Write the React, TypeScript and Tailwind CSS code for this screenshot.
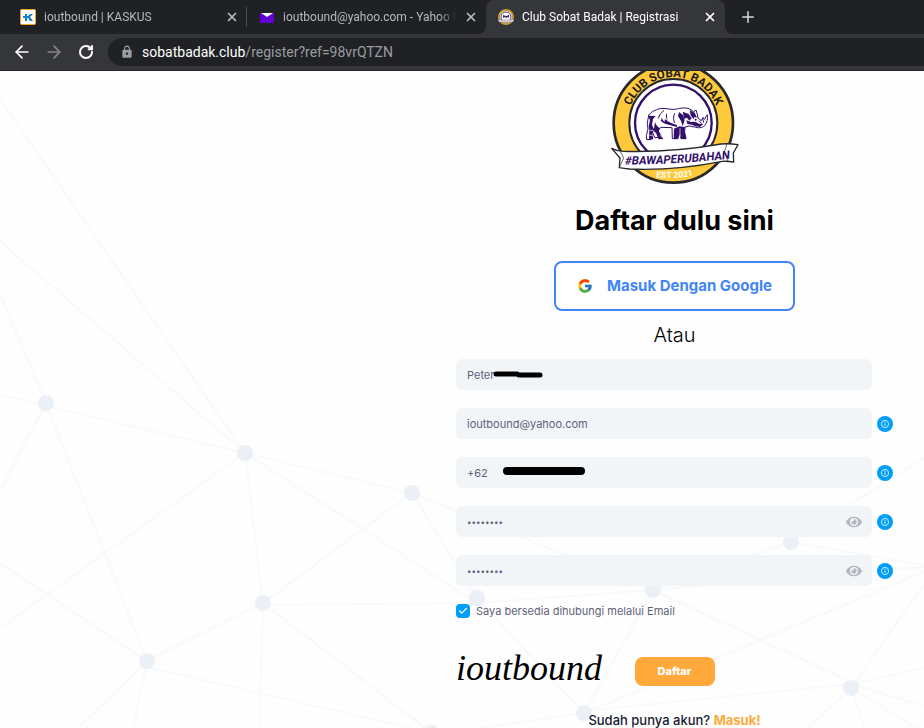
import type { ReactNode } from "react";
import { ArrowLeft, ArrowRight, Check, Plus, RotateCw, X } from "lucide-react";
import { FaEye } from "react-icons/fa";
import { FcGoogle } from "react-icons/fc";
import { MdLock } from "react-icons/md";

type TabProps = {
  title: string;
  icon: ReactNode;
  active?: boolean;
  divider?: boolean;
};

type FieldProps = {
  id: string;
  label: string;
  type?: string;
  value: string;
  info?: boolean;
  children?: ReactNode;
};

const nodes = [
  [46, 403],
  [245, 453],
  [412, 493],
  [263, 603],
  [147, 661],
  [432, 733],
  [477, 598],
  [584, 713],
  [653, 590],
  [791, 542],
  [851, 688],
];

const links = [
  "M0 99L245 453M0 241L245 453M0 294L46 403L0 491M0 395L245 453",
  "M46 403L147 661M245 453L412 493M245 453L263 603M245 453L0 628",
  "M245 453L477 603M0 563L147 661M412 493L263 603M412 493L653 590",
  "M412 493L477 598M263 603L147 661M263 605L477 603L653 590M263 603L432 733",
  "M263 603L259 740M147 661L78 728M147 661L131 740M147 667L432 733",
  "M477 598L584 713M584 713L653 590M584 713L432 735M584 711L851 684",
  "M584 713L924 572M653 590L851 682M653 590L791 542M791 542L924 565",
  "M653 590L924 567M791 542L924 458M851 688L924 584M851 684L924 668",
  "M851 684L924 706M851 688L924 733M851 688L869 740M851 688L798 738",
].join("");

function RhinoLogo({ className }: { className: string }) {
  return (
    <svg viewBox="32 9 384 342" className={className} role="img" aria-label="Club Sobat Badak">
      <defs>
        <path id="arc-top" d="M81 165a138 138 0 0 1 276 0" />
        <path id="ribbon" d="M60 290Q230 290 404 270" />
        <path id="arc-bottom" d="M130 320Q220 344 315 312" />
      </defs>
      <circle cx="219" cy="165" r="179" fill="#ffc93c" stroke="#29282c" strokeWidth="8" />
      <circle cx="219" cy="165" r="132" fill="#fff" stroke="#29282c" strokeWidth="6" />
      <circle cx="219" cy="165" r="115" fill="#fff" stroke="#33106b" strokeWidth="7" />
      <text fill="#1b1a1c" fontFamily="Roboto, sans-serif" fontWeight="700" fontSize="35">
        <textPath href="#arc-top" startOffset="50%" textAnchor="middle">
          CLUB SOBAT BADAK
        </textPath>
      </text>
      <g strokeLinejoin="round" strokeLinecap="round">
        <path
          d="M146 140c8-10 19-14 32-18 18-3 33 4 48 2 16-5 34-7 48 2l6 5 7-5 3 9 3 15 10 8 5-10 4 6 9-14c2 12-1 24-8 33-8 8-20 7-31 4l-15-3-13 3-1 16 4 19h-15l-6-20-5 20h-15l-1-33-34-1-9 12 5 18-14 1-7-18-6 8 3 15-14 1-1-12 5-20-2-16z"
          fill="#fff"
          stroke="#33106b"
          strokeWidth="3"
        />
        <path
          d="M143 143l6 14-4 17 2 13-1 27h13l-3-17 5-13-6-13 3-18 8-9zM170 143c8 13 14 20 27 25l32 9 1-6c-13-3-25-8-36-18l-2 10-8-14-2 12zM164 161c2 10 9 15 15 20l-4 7 14 25-14 1-8-19-7-6zM221 182l16-7 17 2-2 11 6 25h-15l-5-18-4 18h-14zM200 134l-4 9 5 16-1-17zM236 132l12 9 5 15-6 19-5-16-9-15zM247 131l18 7 9 13-7 7-7-9-8 3zM268 126l15 8 7 15-8-2-3 6-8-11zM258 157l14 5 12-1 14 7 11-1-10 10-15-2-9-5-14-2z"
          fill="#33106b"
        />
        <path d="M307 153l3 10M297 159l6 7M190 128q-12 8-16 22M222 137q-6 15 0 27" fill="none" stroke="#33106b" strokeWidth="3" />
        <path d="M239 182v24M149 187h8M148 202h8M180 201l5 7" stroke="#fff" strokeWidth="2" />
        <circle cx="286" cy="155" r="3" fill="#33106b" />
      </g>
      <path
        d="M34 241q17 9 35 9 146 4 293-22 26-2 51 2l-14 25 1 27q-17-3-34-2-148 29-278 23-18-2-31-4l2-29z"
        fill="#fff"
        stroke="#29282c"
        strokeWidth="4"
        strokeLinejoin="round"
      />
      <path d="M60 250l10 20-13 28M380 228l-8 24 11 28" fill="none" stroke="#29282c" strokeWidth="2" />
      <text
        fill="#33106b"
        fontFamily="Roboto, sans-serif"
        fontWeight="700"
        fontStyle="italic"
        fontSize="35"
      >
        <textPath href="#ribbon" startOffset="50%" textAnchor="middle">
          #BAWAPERUBAHAN
        </textPath>
      </text>
      <text fill="#fff" fontFamily="Roboto, sans-serif" fontWeight="700" fontSize="26">
        <textPath href="#arc-bottom" startOffset="50%" textAnchor="middle">
          EST 2021
        </textPath>
      </text>
    </svg>
  );
}

function KaskusIcon() {
  return (
    <svg viewBox="0 0 16 16" className="size-4 shrink-0" aria-hidden="true">
      <rect x=".5" y=".5" width="15" height="15" rx="1" fill="#fff" stroke="#f7a21b" />
      <path d="M3 7h2V5h2v2h1l2-2h3l-3 3 3 4h-3L8 9H7v3H5V9H3z" fill="#1b7fc4" />
    </svg>
  );
}

function MailIcon() {
  return (
    <svg viewBox="0 0 16 16" className="size-4 shrink-0" aria-hidden="true">
      <path d="M1 4h14v10H1z" fill="#6001d2" />
      <path d="M2 4h12L8 8z" fill="#fff" />
    </svg>
  );
}

function BadgeIcon() {
  return (
    <svg viewBox="0 0 16 16" className="size-4 shrink-0" aria-hidden="true">
      <circle cx="8" cy="8" r="7" fill="#fff" stroke="#c79a35" strokeWidth="2" />
      <circle cx="8" cy="8" r="5" fill="#fff" stroke="#55427c" />
      <path d="M5 6l3 1 3-1v3l-1-1-2 1-1-1-2 1z" fill="#44236f" />
      <path d="M0 10l3 1h10l3-1-1 3H1z" fill="#e9e5ee" stroke="#6d6478" strokeWidth=".5" />
    </svg>
  );
}

function Tab({ title, icon, active, divider }: TabProps) {
  return (
    <div
      className={`relative flex w-[239px] items-center gap-2 pr-2 pl-3 ${
        active ? "rounded-t-lg bg-[#35363a] text-white" : "text-[#b6b9bd]"
      }`}
    >
      {active && (
        <>
          <svg viewBox="0 0 8 8" className="absolute bottom-0 -left-2 size-2 fill-[#35363a]" aria-hidden="true">
            <path d="M8 0v8H0a8 8 0 0 0 8-8z" />
          </svg>
          <svg viewBox="0 0 8 8" className="absolute -right-2 bottom-0 size-2 fill-[#35363a]" aria-hidden="true">
            <path d="M0 0v8h8a8 8 0 0 1-8-8z" />
          </svg>
        </>
      )}
      {icon}
      <span className="min-w-0 flex-1 overflow-hidden mask-r-from-90% text-xs whitespace-nowrap">{title}</span>
      <button type="button" aria-label="Tutup tab" className="shrink-0">
        <X className="size-[14px]" strokeWidth={3} />
      </button>
      {divider && <span className="absolute right-0 h-5 w-px bg-[#4a4c50]" />}
    </div>
  );
}

function InfoIcon() {
  return (
    <svg viewBox="0 0 16 16" className="size-4" aria-hidden="true">
      <circle cx="8" cy="8" r="8" fill="#009ef7" />
      <circle cx="8" cy="8" r="3.6" fill="none" stroke="#d9f1ff" strokeWidth=".9" />
      <path d="M8 7.4v2.4M8 5.7v1" stroke="#d9f1ff" strokeWidth="1.1" />
    </svg>
  );
}

function Field({ id, label, type = "text", value, info, children }: FieldProps) {
  return (
    <div className="flex items-center gap-[5px]">
      <div className="relative flex h-[31px] flex-1 items-center">
        <label htmlFor={id} className="sr-only">
          {label}
        </label>
        <input
          id={id}
          type={type}
          defaultValue={value}
          className={`h-full w-full rounded-md bg-[#f2f5f8] px-[11px] text-[#5e6278] outline-none ${
            type === "password" ? "text-[8px]" : "text-[11px]"
          }`}
        />
        {children}
      </div>
      <div className="w-4">
        {info && (
          <button type="button" aria-label={`Info ${label}`} className="block">
            <InfoIcon />
          </button>
        )}
      </div>
    </div>
  );
}

function ShowPassword() {
  return (
    <button type="button" aria-label="Tampilkan password" className="absolute right-[10px] text-[#b5b5c3]">
      <FaEye className="size-4" />
    </button>
  );
}

function Browser() {
  return (
    <header className="bg-[#202124] font-['Roboto',sans-serif]">
      <div className="flex h-[34px] pl-2">
        <Tab title="ioutbound | KASKUS" icon={<KaskusIcon />} divider />
        <Tab title="ioutbound@yahoo.com - Yahoo Mail" icon={<MailIcon />} />
        <Tab title="Club Sobat Badak | Registrasi" icon={<BadgeIcon />} active />
        <button type="button" aria-label="Tab baru" className="ml-[14px] text-[#d5d7da]">
          <Plus className="size-[18px]" strokeWidth={2} />
        </button>
      </div>
      <div className="flex h-[37px] items-center border-b border-[#242528] bg-[#35363a] pl-[6px]">
        <button type="button" aria-label="Kembali" className="flex w-8 justify-center text-white">
          <ArrowLeft className="size-5" />
        </button>
        <button type="button" aria-label="Maju" className="flex w-8 justify-center text-[#85878a]">
          <ArrowRight className="size-5" />
        </button>
        <button type="button" aria-label="Muat ulang" className="flex w-8 justify-center text-white">
          <RotateCw className="size-4" strokeWidth={3} />
        </button>
        <div className="ml-[6px] flex h-7 flex-1 items-center gap-2 rounded-l-full bg-[#202124] pl-3 text-sm text-[#9a9da1]">
          <MdLock className="size-[14px]" />
          <p>
            <span className="text-white">sobatbadak.club</span>/register?ref=98vrQTZN
          </p>
        </div>
      </div>
    </header>
  );
}

export default function App() {
  return (
    <div className="flex min-h-screen flex-col bg-[#fefefe] font-['Inter',sans-serif] text-black">
      <Browser />
      <main className="relative flex flex-1 justify-end overflow-hidden pr-[31px]">
        <svg
          viewBox="0 71 924 657"
          preserveAspectRatio="xMinYMin slice"
          className="absolute inset-0 h-full w-full"
          aria-hidden="true"
        >
          <path d={links} fill="none" stroke="#f8f9fb" strokeWidth="2" />
          {nodes.map(([x, y]) => (
            <circle key={`${x}-${y}`} cx={x} cy={y} r="8" fill="#ebf0f7" />
          ))}
        </svg>

        <form className="relative flex w-[437px] flex-col" onSubmit={(e) => e.preventDefault()}>
          <RhinoLogo className="h-[114px] w-32 self-center" />
          <h1 className="mt-4 text-center text-[27px] leading-10 font-bold">Daftar dulu sini</h1>
          <button
            type="button"
            className="mt-5 flex h-[50px] w-[241px] items-center justify-center gap-[14px] self-center rounded-lg border-2 border-[#4285f4] bg-white text-[15px] font-bold text-[#4285f4]"
          >
            <FcGoogle className="size-4" />
            Masuk Dengan Google
          </button>
          <p className="mt-3 text-center text-xl leading-6 font-light">Atau</p>

          <div className="mt-3 flex flex-col gap-[18px]">
            <Field id="nama" label="Nama" value="Peter">
              <svg viewBox="0 0 50 8" className="absolute left-[37px] h-2 w-[50px]" aria-hidden="true">
                <path d="M3 3h21l2 1h21" fill="none" stroke="#000" strokeWidth="5" strokeLinecap="round" />
              </svg>
            </Field>
            <Field id="email" label="Email" type="email" value="ioutbound@yahoo.com" info />
            <Field id="telepon" label="Telepon" type="tel" value="+62" info>
              <svg viewBox="0 0 82 12" className="absolute left-[47px] h-3 w-[82px]" aria-hidden="true">
                <path d="M4 4h74" stroke="#000" strokeWidth="8" strokeLinecap="round" />
              </svg>
            </Field>
            <Field id="password" label="Password" type="password" value="12345678" info>
              <ShowPassword />
            </Field>
            <Field id="konfirmasi" label="Konfirmasi password" type="password" value="12345678" info>
              <ShowPassword />
            </Field>
          </div>

          <div className="relative mt-[18px] flex items-center gap-[6px]">
            <input
              id="setuju"
              type="checkbox"
              defaultChecked
              className="size-[14px] appearance-none rounded bg-[#e4e8ee] checked:bg-[#009ef7]"
            />
            <Check className="pointer-events-none absolute left-[2px] size-[10px] text-white" strokeWidth={3} />
            <label htmlFor="setuju" className="text-[11px] leading-[14px] text-[#5e6278]">
              Saya bersedia dihubungi melalui Email
            </label>
          </div>

          <div className="mt-8 grid h-[42px] grid-cols-[1fr_auto_1fr] items-center">
            <span className="self-start font-['Liberation_Serif',serif] text-4xl leading-9 italic">ioutbound</span>
            <button
              type="submit"
              className="h-[29px] w-20 rounded-lg bg-[#ffa93c] text-[11px] font-extrabold text-white"
            >
              Daftar
            </button>
          </div>

          <p className="mt-5 text-center text-[13px] leading-4 font-medium text-[#181c32]">
            Sudah punya akun?{" "}
            <a href="#masuk" className="font-bold text-[#ffa93c]">
              Masuk!
            </a>
          </p>
        </form>
      </main>
    </div>
  );
}
